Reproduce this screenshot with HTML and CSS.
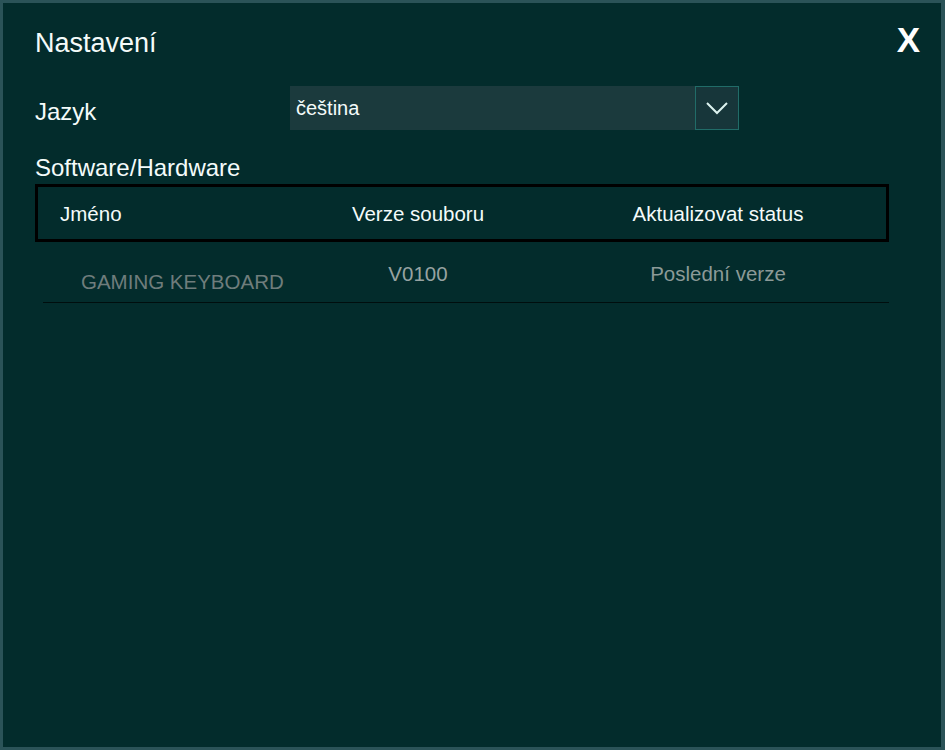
FILE: index.html
```html
<!DOCTYPE html>
<html lang="cs">
<head>
  <meta charset="UTF-8" />
  <meta name="viewport" content="width=device-width, initial-scale=1.0"/>
  <title>Nastavení</title>
  <link rel="stylesheet" href="styles.css">
</head>
<body>
  <div class="dialog">
    <div class="dialog-head">
      <h2 class="dialog-title">Nastavení</h2>
      <div class="close-btn">X</div>
    </div>

    <div class="settings">
      <div class="lang-row">
        <div class="label lang-label">Jazyk</div>
        <div class="select">
          <div class="select-value">čeština</div>
          <div class="select-btn">
            <svg width="42" height="42" viewBox="0 0 42 42">
              <polyline points="11,16 21,26 31,16" fill="none" stroke="#dcf3ef" stroke-width="2"/>
            </svg>
          </div>
        </div>
      </div>

      <div class="label section-label">Software/Hardware</div>
      <div class="table-head">
        <div class="col col-name">Jméno</div>
        <div class="col col-center">Verze souboru</div>
        <div class="col col-center">Aktualizovat status</div>
      </div>
      <div class="table-row">
        <div class="cell cell-name">GAMING KEYBOARD</div>
        <div class="cell cell-center cell-version">V0100</div>
        <div class="cell cell-center cell-status">Poslední verze</div>
      </div>
    </div>
  </div>
</body>
</html>
```

FILE: styles.css
```css
body {
  margin: 0;
  background: #032c2c;
  color: #f4fbfa;
  font-family: "Liberation Sans", Arial, sans-serif;
}
.dialog {
  box-sizing: border-box;
  width: 945px;
  height: 750px;
  border: 3px solid #2b5358;
  border-right-width: 4px;
  background: #032c2c;
  padding: 22px 21px 0 32px;
}
.dialog-head {
  display: flex;
  justify-content: space-between;
  align-items: baseline;
}
.dialog-title {
  margin: 0;
  font-size: 27px;
  font-weight: normal;
  line-height: 30px;
}
.close-btn {
  font-size: 35px;
  font-weight: bold;
  line-height: 30px;
  color: #ffffff;
  cursor: pointer;
}
.settings {
  padding-right: 31px;
}
.label {
  font-size: 24px;
  line-height: 28px;
}
.lang-row {
  display: flex;
  align-items: flex-start;
  margin-top: 28px;
}
.lang-label {
  width: 255px;
  margin-top: 12px;
}
.select {
  display: flex;
  width: 449px;
  height: 44px;
  background: #1b3a3d;
}
.select-value {
  flex: 1;
  padding-left: 6px;
  font-size: 20px;
  line-height: 44px;
}
.select-btn {
  box-sizing: border-box;
  width: 44px;
  height: 44px;
  border: 1px solid #216c68;
  background: #17363a;
}
.select-btn svg {
  display: block;
}
.section-label {
  margin-top: 24px;
}
.table-head,
.table-row {
  display: grid;
  grid-template-columns: 230px 300px 300px;
  font-size: 20.5px;
  white-space: nowrap;
}
.table-head {
  margin-top: 2px;
  height: 58px;
  box-sizing: border-box;
  border: 3px solid #000000;
  line-height: 50px;
  padding-top: 2px;
}
.col-name {
  padding-left: 22px;
}
.col-center,
.cell-center {
  text-align: center;
}
.table-row {
  margin-left: 8px;
  grid-template-columns: 225px 300px 300px;
  height: 60px;
  border-bottom: 1px solid #000e0e;
  line-height: 24px;
}
.cell-name {
  padding-top: 28px;
  padding-left: 38px;
  color: #6f7d7c;
}
.cell-version,
.cell-status {
  padding-top: 20px;
}
.cell-version {
  color: #97a3a2;
}
.cell-status {
  color: #8c9a98;
}
```
